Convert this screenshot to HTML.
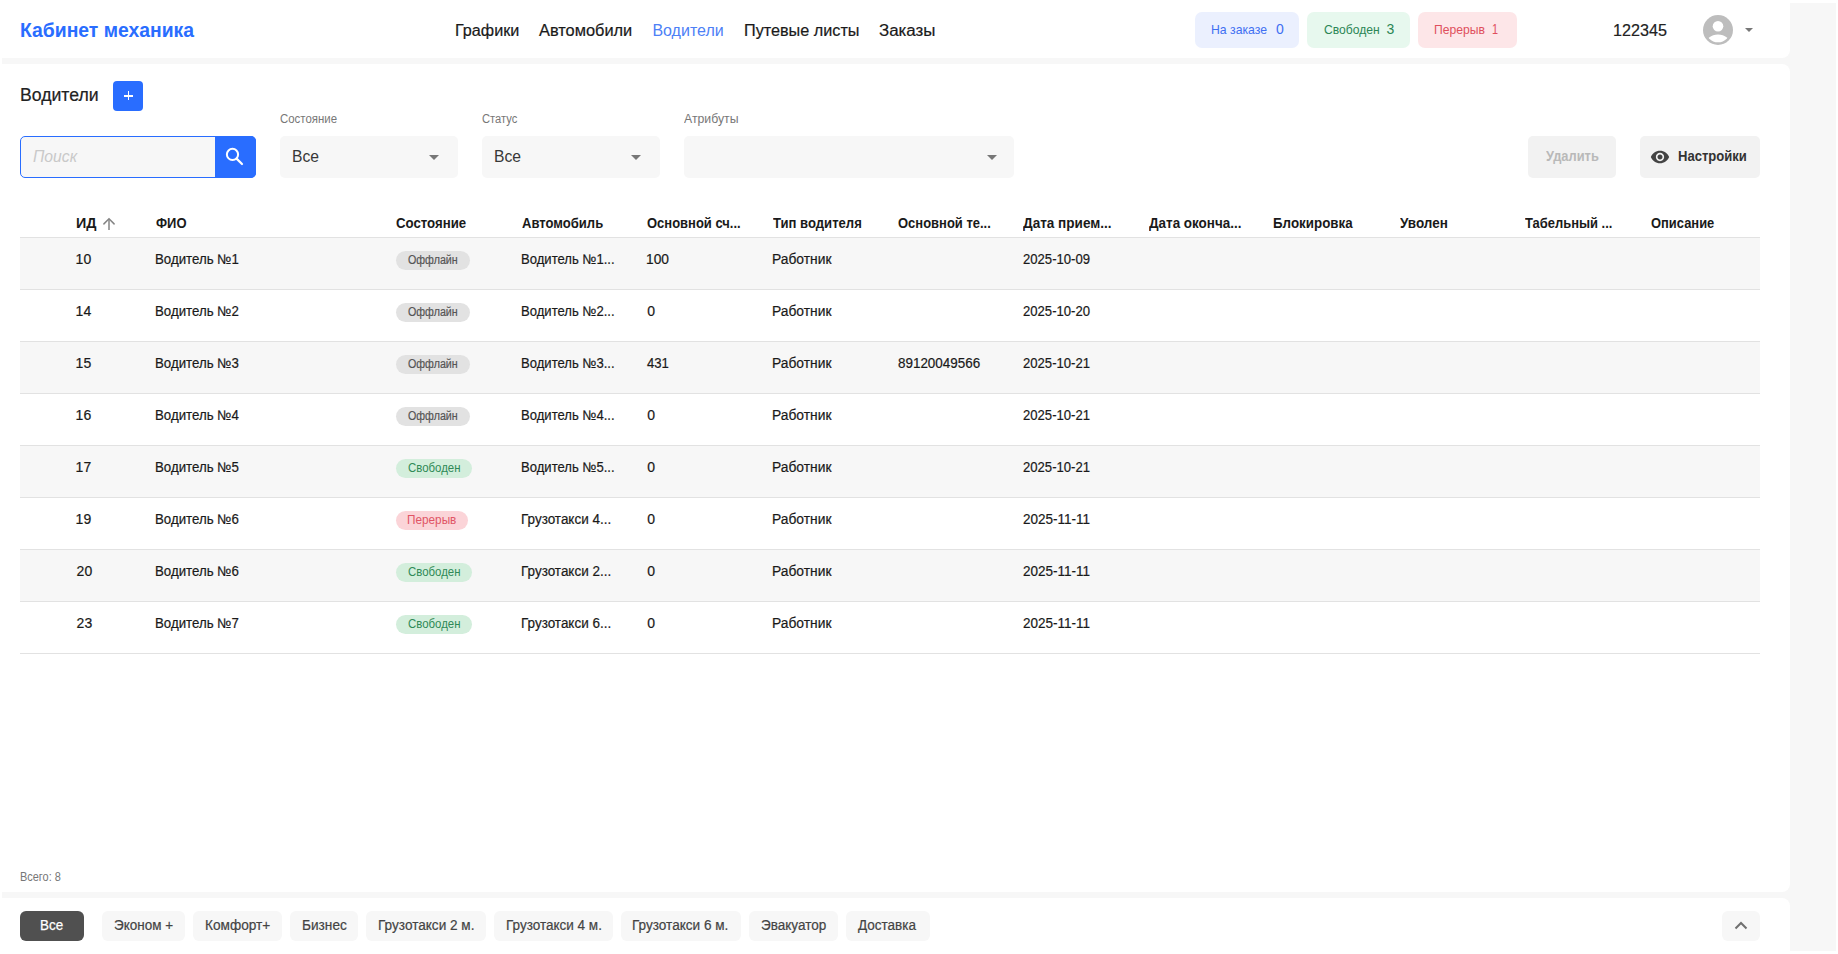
<!DOCTYPE html>
<html><head><meta charset="utf-8">
<style>
*{box-sizing:border-box;margin:0;padding:0}
html,body{width:1838px;height:954px;overflow:hidden;background:#fff}
body{position:relative;font-family:"Liberation Sans",sans-serif;color:#1f1f1f}
.a{position:absolute}
.app{left:2px;top:3px;width:1834px;height:948px;background:#f7f7f7}
.card{position:absolute;background:#fff}
.t{position:absolute;white-space:nowrap;line-height:1;transform-origin:0 0}
.row{position:absolute;left:20px;width:1740px;height:52px;border-bottom:1px solid #e2e2e2}
.g{background:#f7f7f7}
.pill{position:absolute;height:36px;top:12px;border-radius:7px}
.sel{position:absolute;top:136px;height:42px;background:#f7f7f7;border-radius:5px}
.caret{position:absolute;width:0;height:0;border-left:5px solid transparent;border-right:5px solid transparent;border-top:5px solid #777}
.btn{position:absolute;top:136px;height:42px;background:#f2f2f2;border-radius:5px}
.st{position:absolute;left:396px;height:19px;border-radius:10px}
.chip{position:absolute;top:911px;height:30px;background:#f7f7f7;border-radius:6px}
</style></head>
<body>
<div class="a app"></div>
<!-- header card -->
<div class="card" style="left:0;top:0;width:1790px;height:58px;border-bottom-right-radius:8px"></div>
<div class="pill" style="left:1195px;width:104px;background:#ebf0fe"></div>
<div class="pill" style="left:1307px;width:103px;background:#e7f8ee"></div>
<div class="pill" style="left:1418px;width:99px;background:#fde6e8"></div>
<svg class="a" style="left:1703px;top:15px" width="30" height="30" viewBox="0 0 30 30">
  <defs><clipPath id="cc"><circle cx="15" cy="15" r="12.3"/></clipPath></defs>
  <circle cx="15" cy="15" r="15" fill="#bdbdbd"/>
  <circle cx="15" cy="11.3" r="5.3" fill="#fff"/>
  <ellipse cx="15" cy="30" rx="12.5" ry="10.6" fill="#fff" clip-path="url(#cc)"/>
</svg>
<div class="caret" style="left:1745px;top:28px;border-left-width:4.5px;border-right-width:4.5px;border-top-width:4.5px"></div>

<!-- main card -->
<div class="card" style="left:0;top:64px;width:1790px;height:828px;border-top-right-radius:8px;border-bottom-right-radius:8px"></div>
<div class="a" style="left:113px;top:81px;width:30px;height:30px;background:#296dff;border-radius:4px"></div>
<div class="a" style="left:124px;top:95px;width:9px;height:1.7px;background:#fff"></div>
<div class="a" style="left:127.7px;top:91px;width:1.7px;height:9px;background:#fff"></div>

<div class="a" style="left:20px;top:136px;width:236px;height:42px;border:1px solid #296dff;border-radius:5px;background:#f7f7f7"></div>
<div class="a" style="left:215px;top:136px;width:41px;height:42px;background:#296dff;border-radius:0 5px 5px 0"></div>
<svg class="a" style="left:215px;top:137px" width="41" height="40" viewBox="0 0 41 40">
  <circle cx="17.5" cy="17.4" r="5.6" fill="none" stroke="#fff" stroke-width="2"/>
  <line x1="21.6" y1="21.6" x2="27" y2="27" stroke="#fff" stroke-width="2.2" stroke-linecap="round"/>
</svg>

<div class="sel" style="left:280px;width:178px"></div>
<div class="caret" style="left:429px;top:155px"></div>
<div class="sel" style="left:482px;width:178px"></div>
<div class="caret" style="left:631px;top:155px"></div>
<div class="sel" style="left:684px;width:330px"></div>
<div class="caret" style="left:987px;top:155px"></div>

<div class="btn" style="left:1528px;width:88px"></div>
<div class="btn" style="left:1640px;width:120px"></div>
<svg class="a" style="left:1650px;top:147px" width="20" height="20" viewBox="0 0 24 24"><path fill="#444" d="M12 4.5C7 4.5 2.73 7.61 1 12c1.73 4.39 6 7.5 11 7.5s9.27-3.11 11-7.5c-1.73-4.39-6-7.5-11-7.5zM12 17c-2.76 0-5-2.24-5-5s2.24-5 5-5 5 2.24 5 5-2.24 5-5 5zm0-8c-1.66 0-3 1.34-3 3s1.34 3 3 3 3-1.34 3-3-1.34-3-3-3z"/></svg>

<!-- table -->
<div class="a" style="left:20px;top:237px;width:1740px;height:1px;background:#e2e2e2"></div>
<div class="row g" style="top:238px"></div>
<div class="row" style="top:290px"></div>
<div class="row g" style="top:342px"></div>
<div class="row" style="top:394px"></div>
<div class="row g" style="top:446px"></div>
<div class="row" style="top:498px"></div>
<div class="row g" style="top:550px"></div>
<div class="row" style="top:602px"></div>
<svg class="a" style="left:102px;top:217px" width="14" height="14" viewBox="0 0 14 14"><path d="M7 2.2V12.9" stroke="#858585" stroke-width="1.5"/><path d="M1.9 6.9L7 1.8 12.1 6.9" fill="none" stroke="#858585" stroke-width="1.5" stroke-linecap="round"/></svg>

<div class="st" style="top:251px;width:74px;background:#e2e2e2"></div>
<div class="st" style="top:303px;width:74px;background:#e2e2e2"></div>
<div class="st" style="top:355px;width:74px;background:#e2e2e2"></div>
<div class="st" style="top:407px;width:74px;background:#e2e2e2"></div>
<div class="st" style="top:459px;width:76px;background:#d3eedc"></div>
<div class="st" style="top:511px;width:72px;background:#fbd4d8"></div>
<div class="st" style="top:563px;width:76px;background:#d3eedc"></div>
<div class="st" style="top:615px;width:76px;background:#d3eedc"></div>

<!-- footer card -->
<div class="card" style="left:0;top:898px;width:1790px;height:56px;border-top-right-radius:8px"></div>
<div class="chip" style="left:20px;width:64px;background:#505050"></div>
<div class="chip" style="left:102px;width:83px"></div>
<div class="chip" style="left:193px;width:89px"></div>
<div class="chip" style="left:290px;width:68px"></div>
<div class="chip" style="left:366px;width:120px"></div>
<div class="chip" style="left:494px;width:119px"></div>
<div class="chip" style="left:621px;width:120px"></div>
<div class="chip" style="left:749px;width:89px"></div>
<div class="chip" style="left:846px;width:84px"></div>
<div class="chip" style="left:1722px;width:38px"></div>
<svg class="a" style="left:1722px;top:911px" width="38" height="30" viewBox="0 0 38 30"><path d="M13.5 17.5L19 12l5.5 5.5" fill="none" stroke="#707070" stroke-width="2"/></svg>

<div class="t" style="left:20.00px;top:20.00px;font-size:20px;color:#296dff;font-weight:700;transform:scaleX(0.9672)">Кабинет механика</div>
<div class="t" style="left:454.70px;top:23.20px;font-size:16px;color:#1a1a1a;transform:scaleX(1.0106);-webkit-text-stroke:0.2px #1a1a1a">Графики</div>
<div class="t" style="left:539.20px;top:23.20px;font-size:16px;color:#1a1a1a;transform:scaleX(1.0230);-webkit-text-stroke:0.2px #1a1a1a">Автомобили</div>
<div class="t" style="left:652.40px;top:23.20px;font-size:16px;color:#4d80f6">Водители</div>
<div class="t" style="left:743.50px;top:23.20px;font-size:16px;color:#1a1a1a;transform:scaleX(1.0130);-webkit-text-stroke:0.2px #1a1a1a">Путевые листы</div>
<div class="t" style="left:878.60px;top:23.20px;font-size:16px;color:#1a1a1a;transform:scaleX(1.0557);-webkit-text-stroke:0.2px #1a1a1a">Заказы</div>
<div class="t" style="left:1210.80px;top:22.95px;font-size:13px;color:#3f6ff2;transform:scaleX(0.9405)">На заказе</div>
<div class="t" style="left:1276.00px;top:22.10px;font-size:14px;color:#3f6ff2">0</div>
<div class="t" style="left:1323.50px;top:22.95px;font-size:13px;color:#2b8655;transform:scaleX(0.9318)">Свободен</div>
<div class="t" style="left:1386.40px;top:22.10px;font-size:14px;color:#2b8655">3</div>
<div class="t" style="left:1433.50px;top:22.95px;font-size:13px;color:#e04f5c;transform:scaleX(0.9360)">Перерыв</div>
<div class="t" style="left:1492.40px;top:22.10px;font-size:14px;color:#e04f5c;transform:scaleX(0.7750)">1</div>
<div class="t" style="left:1612.90px;top:23.20px;font-size:16px;color:#222;transform:scaleX(1.0089);-webkit-text-stroke:0.2px #222">122345</div>
<div class="t" style="left:20.00px;top:85.70px;font-size:18px;color:#222;transform:scaleX(0.9806);-webkit-text-stroke:0.2px #222">Водители</div>
<div class="t" style="left:280.30px;top:112.50px;font-size:12px;color:#777;transform:scaleX(0.9519)">Состояние</div>
<div class="t" style="left:482.30px;top:112.50px;font-size:12px;color:#777;transform:scaleX(0.9309)">Статус</div>
<div class="t" style="left:684.10px;top:112.50px;font-size:12px;color:#777;transform:scaleX(1.0216)">Атрибуты</div>
<div class="t" style="left:33.30px;top:149.20px;font-size:16px;color:#c9c9c9;font-style:italic;transform:scaleX(0.9800)">Поиск</div>
<div class="t" style="left:291.60px;top:148.80px;font-size:16px;color:#383838;transform:scaleX(0.9800)">Все</div>
<div class="t" style="left:493.60px;top:148.80px;font-size:16px;color:#383838;transform:scaleX(0.9800)">Все</div>
<div class="t" style="left:1546.00px;top:149.10px;font-size:14px;color:#b9b9b9;font-weight:700;transform:scaleX(0.9195)">Удалить</div>
<div class="t" style="left:1677.60px;top:149.10px;font-size:14px;color:#333;font-weight:700;transform:scaleX(0.9328)">Настройки</div>
<div class="t" style="left:75.60px;top:216.10px;font-size:14px;color:#1a1a1a;font-weight:700;transform:scaleX(1.0238)">ИД</div>
<div class="t" style="left:156.00px;top:216.10px;font-size:14px;color:#1a1a1a;font-weight:700;transform:scaleX(0.9273)">ФИО</div>
<div class="t" style="left:396.20px;top:216.10px;font-size:14px;color:#1a1a1a;font-weight:700;transform:scaleX(0.9449)">Состояние</div>
<div class="t" style="left:521.60px;top:216.10px;font-size:14px;color:#1a1a1a;font-weight:700;transform:scaleX(0.9323)">Автомобиль</div>
<div class="t" style="left:647.20px;top:216.10px;font-size:14px;color:#1a1a1a;font-weight:700;transform:scaleX(0.9270)">Основной сч...</div>
<div class="t" style="left:772.50px;top:216.10px;font-size:14px;color:#1a1a1a;font-weight:700;transform:scaleX(0.9353)">Тип водителя</div>
<div class="t" style="left:897.90px;top:216.10px;font-size:14px;color:#1a1a1a;font-weight:700;transform:scaleX(0.9271)">Основной те...</div>
<div class="t" style="left:1023.20px;top:216.10px;font-size:14px;color:#1a1a1a;font-weight:700;transform:scaleX(0.9673)">Дата прием...</div>
<div class="t" style="left:1148.50px;top:216.10px;font-size:14px;color:#1a1a1a;font-weight:700;transform:scaleX(0.9603)">Дата оконча...</div>
<div class="t" style="left:1273.20px;top:216.10px;font-size:14px;color:#1a1a1a;font-weight:700;transform:scaleX(0.9542)">Блокировка</div>
<div class="t" style="left:1400.00px;top:216.10px;font-size:14px;color:#1a1a1a;font-weight:700;transform:scaleX(0.9624)">Уволен</div>
<div class="t" style="left:1525.30px;top:216.10px;font-size:14px;color:#1a1a1a;font-weight:700;transform:scaleX(0.9247)">Табельный ...</div>
<div class="t" style="left:1650.50px;top:216.10px;font-size:14px;color:#1a1a1a;font-weight:700;transform:scaleX(0.9228)">Описание</div>
<div class="t" style="left:75.60px;top:252.10px;font-size:14px;color:#1a1a1a;-webkit-text-stroke:0.2px #1a1a1a">10</div>
<div class="t" style="left:155.00px;top:252.10px;font-size:14px;color:#1a1a1a;transform:scaleX(0.9473);-webkit-text-stroke:0.2px #1a1a1a">Водитель №1</div>
<div class="t" style="left:520.60px;top:252.10px;font-size:14px;color:#1a1a1a;transform:scaleX(0.9341);-webkit-text-stroke:0.2px #1a1a1a">Водитель №1...</div>
<div class="t" style="left:646.20px;top:252.10px;font-size:14px;color:#1a1a1a;transform:scaleX(0.9828);-webkit-text-stroke:0.2px #1a1a1a">100</div>
<div class="t" style="left:771.50px;top:252.10px;font-size:14px;color:#1a1a1a;transform:scaleX(0.9875);-webkit-text-stroke:0.2px #1a1a1a">Работник</div>
<div class="t" style="left:1023.20px;top:252.10px;font-size:14px;color:#1a1a1a;transform:scaleX(0.9357);-webkit-text-stroke:0.2px #1a1a1a">2025-10-09</div>
<div class="t" style="left:408.40px;top:253.80px;font-size:12px;color:#555;transform:scaleX(0.8912);-webkit-text-stroke:0.2px #555">Оффлайн</div>
<div class="t" style="left:75.60px;top:304.10px;font-size:14px;color:#1a1a1a;-webkit-text-stroke:0.2px #1a1a1a">14</div>
<div class="t" style="left:155.00px;top:304.10px;font-size:14px;color:#1a1a1a;transform:scaleX(0.9473);-webkit-text-stroke:0.2px #1a1a1a">Водитель №2</div>
<div class="t" style="left:520.60px;top:304.10px;font-size:14px;color:#1a1a1a;transform:scaleX(0.9341);-webkit-text-stroke:0.2px #1a1a1a">Водитель №2...</div>
<div class="t" style="left:647.20px;top:304.10px;font-size:14px;color:#1a1a1a;-webkit-text-stroke:0.2px #1a1a1a">0</div>
<div class="t" style="left:771.50px;top:304.10px;font-size:14px;color:#1a1a1a;transform:scaleX(0.9875);-webkit-text-stroke:0.2px #1a1a1a">Работник</div>
<div class="t" style="left:1023.20px;top:304.10px;font-size:14px;color:#1a1a1a;transform:scaleX(0.9357);-webkit-text-stroke:0.2px #1a1a1a">2025-10-20</div>
<div class="t" style="left:408.40px;top:305.80px;font-size:12px;color:#555;transform:scaleX(0.8912);-webkit-text-stroke:0.2px #555">Оффлайн</div>
<div class="t" style="left:75.60px;top:356.10px;font-size:14px;color:#1a1a1a;-webkit-text-stroke:0.2px #1a1a1a">15</div>
<div class="t" style="left:155.00px;top:356.10px;font-size:14px;color:#1a1a1a;transform:scaleX(0.9473);-webkit-text-stroke:0.2px #1a1a1a">Водитель №3</div>
<div class="t" style="left:520.60px;top:356.10px;font-size:14px;color:#1a1a1a;transform:scaleX(0.9341);-webkit-text-stroke:0.2px #1a1a1a">Водитель №3...</div>
<div class="t" style="left:647.20px;top:356.10px;font-size:14px;color:#1a1a1a;transform:scaleX(0.9353);-webkit-text-stroke:0.2px #1a1a1a">431</div>
<div class="t" style="left:771.50px;top:356.10px;font-size:14px;color:#1a1a1a;transform:scaleX(0.9875);-webkit-text-stroke:0.2px #1a1a1a">Работник</div>
<div class="t" style="left:897.90px;top:356.10px;font-size:14px;color:#1a1a1a;transform:scaleX(0.9591);-webkit-text-stroke:0.2px #1a1a1a">89120049566</div>
<div class="t" style="left:1023.20px;top:356.10px;font-size:14px;color:#1a1a1a;transform:scaleX(0.9357);-webkit-text-stroke:0.2px #1a1a1a">2025-10-21</div>
<div class="t" style="left:408.40px;top:357.80px;font-size:12px;color:#555;transform:scaleX(0.8912);-webkit-text-stroke:0.2px #555">Оффлайн</div>
<div class="t" style="left:75.60px;top:408.10px;font-size:14px;color:#1a1a1a;-webkit-text-stroke:0.2px #1a1a1a">16</div>
<div class="t" style="left:155.00px;top:408.10px;font-size:14px;color:#1a1a1a;transform:scaleX(0.9473);-webkit-text-stroke:0.2px #1a1a1a">Водитель №4</div>
<div class="t" style="left:520.60px;top:408.10px;font-size:14px;color:#1a1a1a;transform:scaleX(0.9341);-webkit-text-stroke:0.2px #1a1a1a">Водитель №4...</div>
<div class="t" style="left:647.20px;top:408.10px;font-size:14px;color:#1a1a1a;-webkit-text-stroke:0.2px #1a1a1a">0</div>
<div class="t" style="left:771.50px;top:408.10px;font-size:14px;color:#1a1a1a;transform:scaleX(0.9875);-webkit-text-stroke:0.2px #1a1a1a">Работник</div>
<div class="t" style="left:1023.20px;top:408.10px;font-size:14px;color:#1a1a1a;transform:scaleX(0.9357);-webkit-text-stroke:0.2px #1a1a1a">2025-10-21</div>
<div class="t" style="left:408.40px;top:409.80px;font-size:12px;color:#555;transform:scaleX(0.8912);-webkit-text-stroke:0.2px #555">Оффлайн</div>
<div class="t" style="left:75.60px;top:460.10px;font-size:14px;color:#1a1a1a;-webkit-text-stroke:0.2px #1a1a1a">17</div>
<div class="t" style="left:155.00px;top:460.10px;font-size:14px;color:#1a1a1a;transform:scaleX(0.9473);-webkit-text-stroke:0.2px #1a1a1a">Водитель №5</div>
<div class="t" style="left:520.60px;top:460.10px;font-size:14px;color:#1a1a1a;transform:scaleX(0.9341);-webkit-text-stroke:0.2px #1a1a1a">Водитель №5...</div>
<div class="t" style="left:647.20px;top:460.10px;font-size:14px;color:#1a1a1a;-webkit-text-stroke:0.2px #1a1a1a">0</div>
<div class="t" style="left:771.50px;top:460.10px;font-size:14px;color:#1a1a1a;transform:scaleX(0.9875);-webkit-text-stroke:0.2px #1a1a1a">Работник</div>
<div class="t" style="left:1023.20px;top:460.10px;font-size:14px;color:#1a1a1a;transform:scaleX(0.9357);-webkit-text-stroke:0.2px #1a1a1a">2025-10-21</div>
<div class="t" style="left:408.10px;top:461.80px;font-size:12px;color:#2f8a57;transform:scaleX(0.9513)">Свободен</div>
<div class="t" style="left:75.60px;top:512.10px;font-size:14px;color:#1a1a1a;-webkit-text-stroke:0.2px #1a1a1a">19</div>
<div class="t" style="left:155.00px;top:512.10px;font-size:14px;color:#1a1a1a;transform:scaleX(0.9473);-webkit-text-stroke:0.2px #1a1a1a">Водитель №6</div>
<div class="t" style="left:520.60px;top:512.10px;font-size:14px;color:#1a1a1a;transform:scaleX(0.9628);-webkit-text-stroke:0.2px #1a1a1a">Грузотакси 4...</div>
<div class="t" style="left:647.20px;top:512.10px;font-size:14px;color:#1a1a1a;-webkit-text-stroke:0.2px #1a1a1a">0</div>
<div class="t" style="left:771.50px;top:512.10px;font-size:14px;color:#1a1a1a;transform:scaleX(0.9875);-webkit-text-stroke:0.2px #1a1a1a">Работник</div>
<div class="t" style="left:1023.20px;top:512.10px;font-size:14px;color:#1a1a1a;transform:scaleX(0.9645);-webkit-text-stroke:0.2px #1a1a1a">2025-11-11</div>
<div class="t" style="left:407.10px;top:513.80px;font-size:12px;color:#e05565;transform:scaleX(0.9813)">Перерыв</div>
<div class="t" style="left:76.60px;top:564.10px;font-size:14px;color:#1a1a1a;-webkit-text-stroke:0.2px #1a1a1a">20</div>
<div class="t" style="left:155.00px;top:564.10px;font-size:14px;color:#1a1a1a;transform:scaleX(0.9473);-webkit-text-stroke:0.2px #1a1a1a">Водитель №6</div>
<div class="t" style="left:520.60px;top:564.10px;font-size:14px;color:#1a1a1a;transform:scaleX(0.9628);-webkit-text-stroke:0.2px #1a1a1a">Грузотакси 2...</div>
<div class="t" style="left:647.20px;top:564.10px;font-size:14px;color:#1a1a1a;-webkit-text-stroke:0.2px #1a1a1a">0</div>
<div class="t" style="left:771.50px;top:564.10px;font-size:14px;color:#1a1a1a;transform:scaleX(0.9875);-webkit-text-stroke:0.2px #1a1a1a">Работник</div>
<div class="t" style="left:1023.20px;top:564.10px;font-size:14px;color:#1a1a1a;transform:scaleX(0.9645);-webkit-text-stroke:0.2px #1a1a1a">2025-11-11</div>
<div class="t" style="left:408.10px;top:565.80px;font-size:12px;color:#2f8a57;transform:scaleX(0.9513)">Свободен</div>
<div class="t" style="left:76.60px;top:616.10px;font-size:14px;color:#1a1a1a;-webkit-text-stroke:0.2px #1a1a1a">23</div>
<div class="t" style="left:155.00px;top:616.10px;font-size:14px;color:#1a1a1a;transform:scaleX(0.9473);-webkit-text-stroke:0.2px #1a1a1a">Водитель №7</div>
<div class="t" style="left:520.60px;top:616.10px;font-size:14px;color:#1a1a1a;transform:scaleX(0.9628);-webkit-text-stroke:0.2px #1a1a1a">Грузотакси 6...</div>
<div class="t" style="left:647.20px;top:616.10px;font-size:14px;color:#1a1a1a;-webkit-text-stroke:0.2px #1a1a1a">0</div>
<div class="t" style="left:771.50px;top:616.10px;font-size:14px;color:#1a1a1a;transform:scaleX(0.9875);-webkit-text-stroke:0.2px #1a1a1a">Работник</div>
<div class="t" style="left:1023.20px;top:616.10px;font-size:14px;color:#1a1a1a;transform:scaleX(0.9645);-webkit-text-stroke:0.2px #1a1a1a">2025-11-11</div>
<div class="t" style="left:408.10px;top:617.80px;font-size:12px;color:#2f8a57;transform:scaleX(0.9513)">Свободен</div>
<div class="t" style="left:19.80px;top:870.80px;font-size:12px;color:#777;transform:scaleX(0.9111)">Всего: 8</div>
<div class="t" style="left:40.20px;top:918.10px;font-size:14px;color:#fff;transform:scaleX(0.9576);-webkit-text-stroke:0.25px #fff">Все</div>
<div class="t" style="left:113.50px;top:918.10px;font-size:14px;color:#444;transform:scaleX(0.9632);-webkit-text-stroke:0.2px #444">Эконом +</div>
<div class="t" style="left:204.50px;top:918.10px;font-size:14px;color:#444;transform:scaleX(0.9757);-webkit-text-stroke:0.2px #444">Комфорт+</div>
<div class="t" style="left:302.00px;top:918.10px;font-size:14px;color:#444;transform:scaleX(0.9759);-webkit-text-stroke:0.2px #444">Бизнес</div>
<div class="t" style="left:377.50px;top:918.10px;font-size:14px;color:#444;transform:scaleX(0.9709);-webkit-text-stroke:0.2px #444">Грузотакси 2 м.</div>
<div class="t" style="left:505.80px;top:918.10px;font-size:14px;color:#444;transform:scaleX(0.9648);-webkit-text-stroke:0.2px #444">Грузотакси 4 м.</div>
<div class="t" style="left:632.30px;top:918.10px;font-size:14px;color:#444;transform:scaleX(0.9689);-webkit-text-stroke:0.2px #444">Грузотакси 6 м.</div>
<div class="t" style="left:760.90px;top:918.10px;font-size:14px;color:#444;transform:scaleX(0.9661);-webkit-text-stroke:0.2px #444">Эвакуатор</div>
<div class="t" style="left:858.35px;top:918.10px;font-size:14px;color:#444;transform:scaleX(0.9650);-webkit-text-stroke:0.2px #444">Доставка</div>
</body></html>
